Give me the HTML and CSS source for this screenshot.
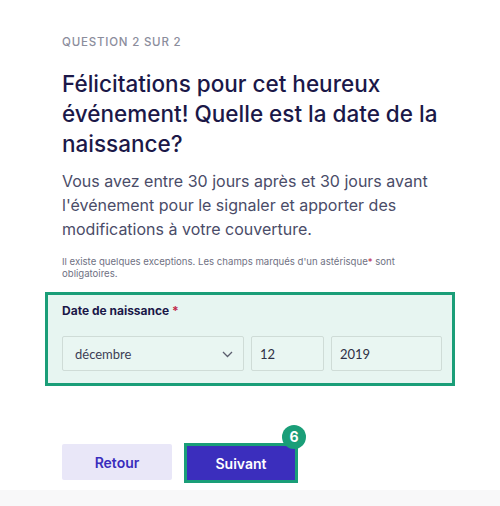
FILE: index.html
```html
<!DOCTYPE html>
<html lang="fr">
<head>
<meta charset="utf-8">
<link rel="stylesheet" href="styles.css">
</head>
<body>
<main class="page">
  <div class="intro">
    <p class="step">QUESTION 2 SUR 2</p>
    <h1 class="title">Félicitations pour cet heureux événement! Quelle est la date de la naissance?</h1>
    <p class="lead">Vous avez entre 30 jours après et 30 jours avant l'événement pour le signaler et apporter des modifications à votre couverture.</p>
    <p class="note">Il existe quelques exceptions. Les champs marqués d'un astérisque<span class="req">*</span> sont<br>obligatoires.</p>
  </div>
  <div class="field-box">
    <div class="label">Date de naissance <span class="req">*</span></div>
    <div class="fields">
      <div class="control select">
        <span>décembre</span>
        <svg class="chev" width="11" height="7" viewBox="0 0 11 7"><path d="M1 1 L5.5 5.5 L10 1" fill="none" stroke="#5b5e6e" stroke-width="1.3"/></svg>
      </div>
      <div class="control day">12</div>
      <div class="control year">2019</div>
    </div>
  </div>
  <div class="actions">
    <button class="btn back">Retour</button>
    <button class="btn next">Suivant<span class="badge">6</span></button>
  </div>
</main>
<div class="footer-band"></div>
</body>
</html>
```
FILE: styles.css
```css
* { box-sizing: border-box; }
html, body { margin: 0; padding: 0; background: #fff; }
body {
  font-family: "Inter", "Lato", sans-serif;
  height: 506px;
  display: flex;
  flex-direction: column;
}
.page {
  padding: 35px 45px 0 45px;
  flex: 1;
}
.intro { padding: 0 17px; }
.step {
  margin: 0;
  font-size: 11.5px;
  line-height: 14px;
  font-weight: 500;
  color: #8b8d9c;
  letter-spacing: 0.8px;
}
.title {
  margin: 20px 0 0;
  font-size: 22.5px;
  line-height: 30px;
  font-weight: 500;
  color: #1b1848;
}
.lead {
  margin: 10px 0 0;
  font-size: 16px;
  line-height: 24px;
  font-weight: 400;
  color: #4a4c68;
}
.note {
  margin: 15px 0 0;
  font-size: 9.6px;
  line-height: 12px;
  color: #6f7183;
}
.req { color: #c0284a; }
.field-box {
  margin: 12px 0 0;
  width: 410px;
  border: 3px solid #1a9e78;
  background: #e7f5f1;
  padding: 8px 10px 12px 14px;
}
.label {
  font-size: 12px;
  line-height: 16px;
  font-weight: 700;
  color: #1b1848;
}
.fields {
  margin-top: 17px;
  display: flex;
  gap: 7px;
}
.control {
  height: 35px;
  border: 1px solid #cfdcd7;
  border-radius: 2px;
  background: #e9f6f2;
  display: flex;
  align-items: center;
  font-family: "Lato", sans-serif;
  font-size: 13px;
  color: #2e3045;
  padding: 0 8px;
}
.select {
  width: 182px;
  padding: 0 10px 0 12px;
  justify-content: space-between;
  color: #3c3e55;
}
.chev { margin-top: 1px; }
.day { width: 73px; }
.year { width: 111px; }
.actions {
  margin-top: 57px;
  padding-left: 17px;
  display: flex;
  align-items: flex-start;
  gap: 12px;
}
.btn {
  font-family: inherit;
  font-size: 14px;
  font-weight: 600;
  border: none;
  border-radius: 2px;
  cursor: pointer;
}
.back {
  width: 110px;
  height: 36px;
  margin-top: 1px;
  background: #e9e7f8;
  color: #3a2dbd;
}
.next {
  position: relative;
  width: 114px;
  height: 40px;
  border: 3px solid #1a9e78;
  border-radius: 0;
  background: #3b2ebd;
  color: #fff;
}
.badge {
  position: absolute;
  top: -21px;
  right: -11px;
  width: 24px;
  height: 24px;
  border-radius: 50%;
  background: #1a9e78;
  color: #fff;
  font-size: 14px;
  font-weight: 700;
  line-height: 24px;
  text-align: center;
}
.footer-band {
  height: 16px;
  background: #f8f8f9;
}
```
